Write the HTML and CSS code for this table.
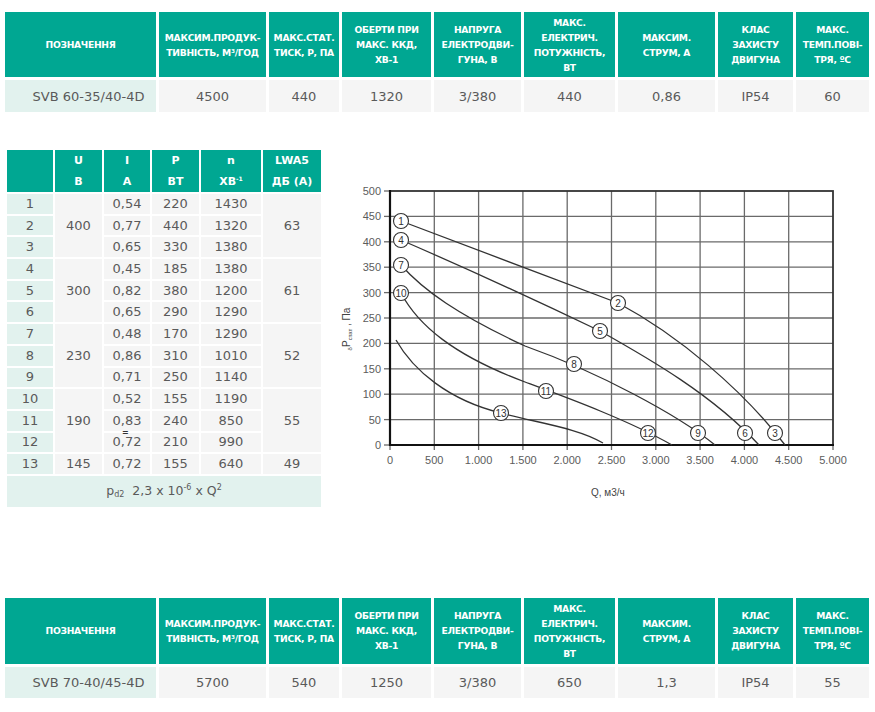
FILE: index.html
```html
<!DOCTYPE html>
<html lang="uk">
<head>
<meta charset="utf-8">
<title>SVB</title>
<link rel="stylesheet" href="styles.css">
</head>
<body>
<table class="spec">
  <tr>
    <th class="w1">Позначення</th>
    <th class="w2">Максим.продук-<br>тивність, м³/год</th>
    <th class="w3">Макс.стат.<br>тиск, Р, Па</th>
    <th class="w4">Оберти при<br>макс. ККД,<br>хв-1</th>
    <th class="w5">Напруга<br>електродви-<br>гуна, В</th>
    <th class="w6">Макс.<br>електрич.<br>потужність,<br>Вт</th>
    <th class="w7">Максим.<br>струм, А</th>
    <th class="w8">Клас<br>захисту<br>двигуна</th>
    <th class="w9">Макс.<br>темп.пові-<br>тря, ºС</th>
  </tr>
  <tr>
    <td class="name">SVB 60-35/40-4D</td>
    <td>4500</td><td>440</td><td>1320</td><td>3/380</td><td>440</td><td>0,86</td><td>IP54</td><td>60</td>
  </tr>
</table>

<div class="middle">
  <table class="perf">
    <tr>
      <th class="p1"></th>
      <th class="p2">U<br>В</th>
      <th class="p3">I<br>А</th>
      <th class="p4">P<br>ВТ</th>
      <th class="p5">n<br>ХВ<sup>-1</sup></th>
      <th class="p6">LWA5<br>ДБ (А)</th>
    </tr>
    <tr><td class="num">1</td><td rowspan="3">400</td><td>0,54</td><td>220</td><td>1430</td><td rowspan="3">63</td></tr>
    <tr><td class="num">2</td><td>0,77</td><td>440</td><td>1320</td></tr>
    <tr><td class="num">3</td><td>0,65</td><td>330</td><td>1380</td></tr>
    <tr><td class="num">4</td><td rowspan="3">300</td><td>0,45</td><td>185</td><td>1380</td><td rowspan="3">61</td></tr>
    <tr><td class="num">5</td><td>0,82</td><td>380</td><td>1200</td></tr>
    <tr><td class="num">6</td><td>0,65</td><td>290</td><td>1290</td></tr>
    <tr><td class="num">7</td><td rowspan="3">230</td><td>0,48</td><td>170</td><td>1290</td><td rowspan="3">52</td></tr>
    <tr><td class="num">8</td><td>0,86</td><td>310</td><td>1010</td></tr>
    <tr><td class="num">9</td><td>0,71</td><td>250</td><td>1140</td></tr>
    <tr><td class="num">10</td><td rowspan="3">190</td><td>0,52</td><td>155</td><td>1190</td><td rowspan="3">55</td></tr>
    <tr><td class="num">11</td><td>0,83</td><td>240</td><td>850</td></tr>
    <tr><td class="num">12</td><td class="mark"><span class="eq">=</span>0,72</td><td>210</td><td>990</td></tr>
    <tr><td class="num">13</td><td>145</td><td>0,72</td><td>155</td><td>640</td><td>49</td></tr>
    <tr><td class="foot" colspan="6">p<sub>d2</sub>&nbsp; 2,3 x 10<sup>-6</sup> x Q<sup>2</sup></td></tr>
  </table>

  <svg class="chart" width="525" height="325" viewBox="340 180 525 325" xmlns="http://www.w3.org/2000/svg">
    <g stroke="#6a6a6a" stroke-width="1.3" fill="none">
      <line x1="436.3" y1="191" x2="436.3" y2="445"/>
      <line x1="480.6" y1="191" x2="480.6" y2="445"/>
      <line x1="524.9" y1="191" x2="524.9" y2="445"/>
      <line x1="569.2" y1="191" x2="569.2" y2="445"/>
      <line x1="613.5" y1="191" x2="613.5" y2="445"/>
      <line x1="657.8" y1="191" x2="657.8" y2="445"/>
      <line x1="702.1" y1="191" x2="702.1" y2="445"/>
      <line x1="746.4" y1="191" x2="746.4" y2="445"/>
      <line x1="790.7" y1="191" x2="790.7" y2="445"/>
      <line x1="392" y1="419.6" x2="835" y2="419.6"/>
      <line x1="392" y1="394.2" x2="835" y2="394.2"/>
      <line x1="392" y1="368.8" x2="835" y2="368.8"/>
      <line x1="392" y1="343.4" x2="835" y2="343.4"/>
      <line x1="392" y1="318" x2="835" y2="318"/>
      <line x1="392" y1="292.6" x2="835" y2="292.6"/>
      <line x1="392" y1="267.2" x2="835" y2="267.2"/>
      <line x1="392" y1="241.8" x2="835" y2="241.8"/>
      <line x1="392" y1="216.4" x2="835" y2="216.4"/>
    </g>
    <g stroke="#6a6a6a" stroke-width="1.3">
      <line x1="386" y1="445" x2="392" y2="445"/>
      <line x1="386" y1="419.6" x2="392" y2="419.6"/>
      <line x1="386" y1="394.2" x2="392" y2="394.2"/>
      <line x1="386" y1="368.8" x2="392" y2="368.8"/>
      <line x1="386" y1="343.4" x2="392" y2="343.4"/>
      <line x1="386" y1="318" x2="392" y2="318"/>
      <line x1="386" y1="292.6" x2="392" y2="292.6"/>
      <line x1="386" y1="267.2" x2="392" y2="267.2"/>
      <line x1="386" y1="241.8" x2="392" y2="241.8"/>
      <line x1="386" y1="216.4" x2="392" y2="216.4"/>
      <line x1="386" y1="191" x2="392" y2="191"/>
      <line x1="392" y1="445" x2="392" y2="450"/>
      <line x1="436.3" y1="445" x2="436.3" y2="450"/>
      <line x1="480.6" y1="445" x2="480.6" y2="450"/>
      <line x1="524.9" y1="445" x2="524.9" y2="450"/>
      <line x1="569.2" y1="445" x2="569.2" y2="450"/>
      <line x1="613.5" y1="445" x2="613.5" y2="450"/>
      <line x1="657.8" y1="445" x2="657.8" y2="450"/>
      <line x1="702.1" y1="445" x2="702.1" y2="450"/>
      <line x1="746.4" y1="445" x2="746.4" y2="450"/>
      <line x1="790.7" y1="445" x2="790.7" y2="450"/>
      <line x1="835" y1="445" x2="835" y2="450"/>
    </g>
    <rect x="392" y="191" width="443" height="254" fill="none" stroke="#333" stroke-width="1.8"/>
    <g stroke="#111" stroke-width="2.2">
      <line x1="392" y1="190" x2="392" y2="446"/>
      <line x1="391" y1="445" x2="836" y2="445"/>
    </g>

    <g class="ylab" text-anchor="end">
      <text x="383" y="449">0</text>
      <text x="383" y="423.6">50</text>
      <text x="383" y="398.2">100</text>
      <text x="383" y="372.8">150</text>
      <text x="383" y="347.4">200</text>
      <text x="383" y="322">250</text>
      <text x="383" y="296.6">300</text>
      <text x="383" y="271.2">350</text>
      <text x="383" y="245.8">400</text>
      <text x="383" y="220.4">450</text>
      <text x="383" y="195">500</text>
    </g>
    <g class="xlab" text-anchor="middle">
      <text x="392" y="464">0</text>
      <text x="436.3" y="464">500</text>
      <text x="480.6" y="464">1.000</text>
      <text x="524.9" y="464">1.500</text>
      <text x="569.2" y="464">2.000</text>
      <text x="613.5" y="464">2.500</text>
      <text x="657.8" y="464">3.000</text>
      <text x="702.1" y="464">3.500</text>
      <text x="746.4" y="464">4.000</text>
      <text x="790.7" y="464">4.500</text>
      <text x="835" y="464">5.000</text>
    </g>
    <text class="atitle" x="593" y="496">Q, м3/ч</text>
    <text class="atitle" transform="translate(352,329) rotate(-90)" text-anchor="middle"><tspan class="tiny" dy="2">δ</tspan><tspan dy="-2">P</tspan><tspan class="tiny" dy="2">стат</tspan><tspan dy="-2"> , Па</tspan></text>

    <g stroke="#333" stroke-width="1.3" fill="none">
      <path d="M403,221 L620,303 C680,335 745,390 787,445"/>
      <path d="M403,240 Q500,282 602,331 C650,358 715,395 761,445"/>
      <path d="M403,265 C425,290 460,315 527,346 C600,372 680,415 717,445"/>
      <path d="M403,293 C420,325 455,355 527,382 C570,398 630,420 674,445"/>
      <path d="M398,340 C415,370 450,400 503,413 C540,423 580,428 605,443"/>
    </g>
    <g class="marks">
      <circle cx="403" cy="221" r="7.5"/>
      <circle cx="620" cy="303" r="7.5"/>
      <circle cx="777" cy="433" r="7.5"/>
      <circle cx="403" cy="240" r="7.5"/>
      <circle cx="602" cy="331" r="7.5"/>
      <circle cx="747" cy="433" r="7.5"/>
      <circle cx="403" cy="265" r="7.5"/>
      <circle cx="576" cy="364" r="7.5"/>
      <circle cx="700" cy="433" r="7.5"/>
      <circle cx="403" cy="293" r="7.5"/>
      <circle cx="548" cy="391" r="7.5"/>
      <circle cx="650" cy="433" r="7.5"/>
      <circle cx="503" cy="413" r="7.5"/>
    </g>
    <g class="mnum" text-anchor="middle">
      <text x="403" y="224.5">1</text>
      <text x="620" y="306.5">2</text>
      <text x="777" y="436.5">3</text>
      <text x="403" y="243.5">4</text>
      <text x="602" y="334.5">5</text>
      <text x="747" y="436.5">6</text>
      <text x="403" y="268.5">7</text>
      <text x="576" y="367.5">8</text>
      <text x="700" y="436.5">9</text>
      <text x="403" y="296.5">10</text>
      <text x="548" y="394.5">11</text>
      <text x="650" y="436.5">12</text>
      <text x="503" y="416.5">13</text>
    </g>
  </svg>
</div>

<table class="spec spec-bottom">
  <tr>
    <th class="w1">Позначення</th>
    <th class="w2">Максим.продук-<br>тивність, м³/год</th>
    <th class="w3">Макс.стат.<br>тиск, Р, Па</th>
    <th class="w4">Оберти при<br>макс. ККД,<br>хв-1</th>
    <th class="w5">Напруга<br>електродви-<br>гуна, В</th>
    <th class="w6">Макс.<br>електрич.<br>потужність,<br>Вт</th>
    <th class="w7">Максим.<br>струм, А</th>
    <th class="w8">Клас<br>захисту<br>двигуна</th>
    <th class="w9">Макс.<br>темп.пові-<br>тря, ºС</th>
  </tr>
  <tr>
    <td class="name">SVB 70-40/45-4D</td>
    <td>5700</td><td>540</td><td>1250</td><td>3/380</td><td>650</td><td>1,3</td><td>IP54</td><td>55</td>
  </tr>
</table>
</body>
</html>
```

FILE: styles.css
```css
* { box-sizing: content-box; }
body {
  margin: 0;
  padding-top: 9px;
  background: #fff;
  font-family: "DejaVu Sans", "Noto Sans", sans-serif;
  color: #5a5a5a;
}

/* spec tables */
.spec {
  border-collapse: separate;
  border-spacing: 3px;
  margin-left: 2px;
  table-layout: fixed;
}
.spec th {
  background: #00a792;
  color: #fff;
  font-weight: bold;
  font-size: 9.2px;
  letter-spacing: -0.3px;
  line-height: 15px;
  height: 65px;
  padding: 0;
  text-transform: uppercase;
  text-align: center;
  vertical-align: middle;
}
.spec td {
  background: #f5f5f5;
  height: 32px;
  padding: 0;
  font-size: 13px;
  text-align: center;
  vertical-align: middle;
  color: #5a5a5a;
}
.spec td.name {
  background: #e2f2ee;
  padding-left: 16px;
}
.w1 { width: 151px; }
.w2 { width: 107px; }
.w3 { width: 70px; }
.w4 { width: 89px; }
.w5 { width: 87px; }
.w6 { width: 91px; }
.w7 { width: 97px; }
.w8 { width: 75px; }
.w9 { width: 73px; }

.spec-bottom { margin-top: 86px; }
.spec-bottom th { height: 66px; }
.spec-bottom td { height: 31px; }

/* middle */
.middle {
  display: flex;
  align-items: flex-start;
  margin-top: 33px;
}
.perf {
  border-collapse: separate;
  border-spacing: 2px;
  margin-left: 5px;
  table-layout: fixed;
}
.perf th {
  background: #00a792;
  color: #fff;
  font-weight: bold;
  font-size: 11px;
  line-height: 21px;
  height: 42px;
  padding: 0;
  text-align: center;
}
.perf th sup {
  font-size: 6px;
  line-height: 0;
  vertical-align: 4px;
}
.perf td {
  background: #f5f5f5;
  height: 19.7px;
  padding: 0;
  font-size: 13px;
  line-height: 16px;
  text-align: center;
  vertical-align: middle;
  color: #5a5a5a;
}
.perf td.num { background: #e2f2ee; }
.perf td.mark { position: relative; }
.eq {
  position: absolute;
  left: 18px;
  top: -4px;
  font-size: 8px;
  line-height: 8px;
  font-weight: bold;
  color: #333;
}
.perf td.foot {
  background: #e2f2ee;
  height: 31px;
  font-size: 12.5px;
}
.foot sub { font-size: 8px; vertical-align: -2px; line-height: 0; }
.foot sup { font-size: 8px; vertical-align: 5px; line-height: 0; }
.p1 { width: 46px; }
.p2 { width: 47px; }
.p3 { width: 46px; }
.p4 { width: 47px; }
.p5 { width: 60px; }
.p6 { width: 58px; }

/* chart */
.chart {
  display: block;
  margin-left: 15px;
  margin-top: 32px;
  flex: none;
}
.ylab text, .xlab text {
  font-family: "Liberation Sans", Arial, sans-serif;
  font-size: 11px;
  fill: #5c5c5c;
}
.atitle {
  font-family: "Liberation Sans", Arial, sans-serif;
  font-size: 10px;
  fill: #444;
}
.tiny { font-size: 6px; }
.marks circle {
  fill: #fff;
  stroke: #333;
  stroke-width: 1.1;
}
.mnum text {
  font-family: "Liberation Sans", Arial, sans-serif;
  font-size: 10px;
  fill: #333;
}
```
